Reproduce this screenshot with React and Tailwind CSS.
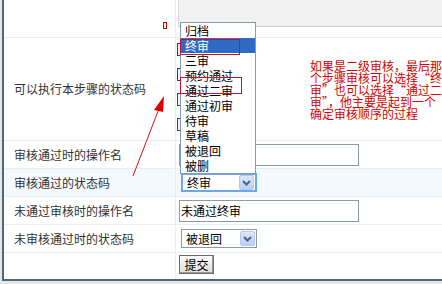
const font = { fontFamily: '"Noto Sans CJK SC", "Liberation Sans", sans-serif' };

const options = ['归档', '终审', '三审', '预约通过', '通过二审', '通过初审', '待审', '草稿', '被退回', '被删'];

function Chevron() {
  return (
    <svg width="9" height="6" viewBox="0 0 9 6">
      <path d="M1 1 L4.5 4.5 L8 1" fill="none" stroke="#4d6185" strokeWidth="2" />
    </svg>
  );
}

function SelectBox({ value, focused }) {
  return (
    <div
      className={`flex items-center justify-between w-[76px] h-[19px] bg-white pl-[4px] pr-[1px] text-[12px] text-black ${
        focused ? 'border-2 border-[#6fa8e0]' : 'border border-[#8a9aa6]'
      }`}
    >
      <span className="leading-none">{value}</span>
      <span className="flex items-center justify-center w-[15px] h-[15px] border border-[#b6c8ec] bg-gradient-to-b from-[#dde7fb] to-[#b9cdf6] rounded-[2px]">
        <Chevron />
      </span>
    </div>
  );
}

function Row({ label, h, bg = 'bg-white', children }) {
  return (
    <div className={`grid grid-cols-[172px_1fr] border-b border-[#ececec] ${bg}`} style={{ height: h }}>
      <div className="flex items-center pl-[10px] text-[12px] text-[#333] border-r border-[#ececec]">{label}</div>
      <div className="flex items-center pl-[3px]">{children}</div>
    </div>
  );
}

export default function App() {
  return (
    <div className="relative w-[442px] h-[284px] overflow-hidden bg-[#e6e6e6]" style={font}>
      <div className="ml-[2px] h-[281px] bg-white border-l-2 border-b-2 border-[#4b6a80]">
        {/* top row */}
        <div className="grid grid-cols-[172px_1fr] h-[38px] border-b border-[#ececec]">
          <div className="relative border-r border-[#ececec]">
            <span className="absolute left-[159px] top-[22px] w-[4px] h-[7px] border border-[#d40000]" />
          </div>
          <div className="pl-[2px]">
            <div className="h-[27px] bg-[#f1f1f1] border-b border-[#c9c9c9] border-l border-l-[#d8d8d8]" />
          </div>
        </div>

        {/* status code row */}
        <div className="grid grid-cols-[172px_1fr] h-[103px] border-b border-[#ececec]">
          <div className="flex items-center pl-[10px] text-[12px] text-[#333] border-r border-[#ececec]">
            可以执行本步骤的状态码
          </div>
          <div className="flex flex-col gap-[12px] pt-[5px] pl-[1px]">
            <span className="w-[14px] h-[13px] border border-[#2a4470] bg-[#f6eef0]" />
            <span className="w-[14px] h-[13px] border border-[#2a4470] bg-[#eef2f8]" />
            <span className="w-[14px] h-[13px] border border-[#2a4470] bg-[#f6eef0]" />
            <span className="w-[14px] h-[13px] border border-[#2a4470] bg-[#eef2f8]" />
          </div>
        </div>

        <Row label="审核通过时的操作名" h={28}>
          <div className="w-[180px] h-[22px] border border-[#8a9aa6] bg-white" />
        </Row>
        <Row label="审核通过的状态码" h={28} bg="bg-[#f3f9fd]">
          <div className="pl-[2px]">
            <SelectBox value="终审" focused />
          </div>
        </Row>
        <Row label="未通过审核时的操作名" h={28}>
          <div className="flex items-center w-[180px] h-[22px] border border-[#8a9aa6] bg-white pl-[1px] text-[12px] text-black">
            未通过终审
          </div>
        </Row>
        <Row label="未审核通过时的状态码" h={28}>
          <div className="pl-[2px]">
            <SelectBox value="被退回" />
          </div>
        </Row>
        <div className="grid grid-cols-[172px_1fr] h-[26px]">
          <div className="border-r border-[#ececec]" />
          <div className="flex items-start pt-[2px] pl-[3px]">
            <button className="w-[35px] h-[19px] border border-[#6d6d6d] bg-gradient-to-b from-[#fbfbfb] to-[#dcdcdc] text-[12px] leading-none text-black shadow-[inset_-1px_-1px_0_#9a9a9a]">
              提交
            </button>
          </div>
        </div>
      </div>

      {/* open dropdown list */}
      <div className="absolute left-[180px] top-[22px] w-[76px] h-[152px] border border-[#7f9db9] bg-white py-0 text-[12px] text-black">
        {options.map((o, i) => (
          <div
            key={o}
            className={`h-[15px] flex items-center pl-[4px] leading-none ${i === 1 ? 'bg-[#316ac5] text-white' : ''}`}
          >
            {o}
          </div>
        ))}
      </div>
      <span className="absolute left-[180px] top-[39px] w-[60px] h-[16px] border border-[#c8102e]" />
      <span className="absolute left-[180px] top-[77px] w-[62px] h-[17px] border border-[#c8102e]" />

      {/* annotation */}
      <div className="absolute left-[310px] top-[60px] text-[12px] leading-[12px] text-[#d40000] whitespace-nowrap">
        如果是二级审核，最后那
        <br />
        个步骤审核可以选择“终
        <br />
        审”也可以选择“通过二
        <br />
        审”，他主要是起到一个
        <br />
        确定审核顺序的过程
      </div>

      {/* arrow */}
      <svg className="absolute left-0 top-0 pointer-events-none" width="442" height="284">
        <line x1="133" y1="176" x2="160" y2="106" stroke="#d01010" strokeWidth="1" />
        <polygon points="164,96 154,110 163,112" fill="#e00000" />
      </svg>
    </div>
  );
}
